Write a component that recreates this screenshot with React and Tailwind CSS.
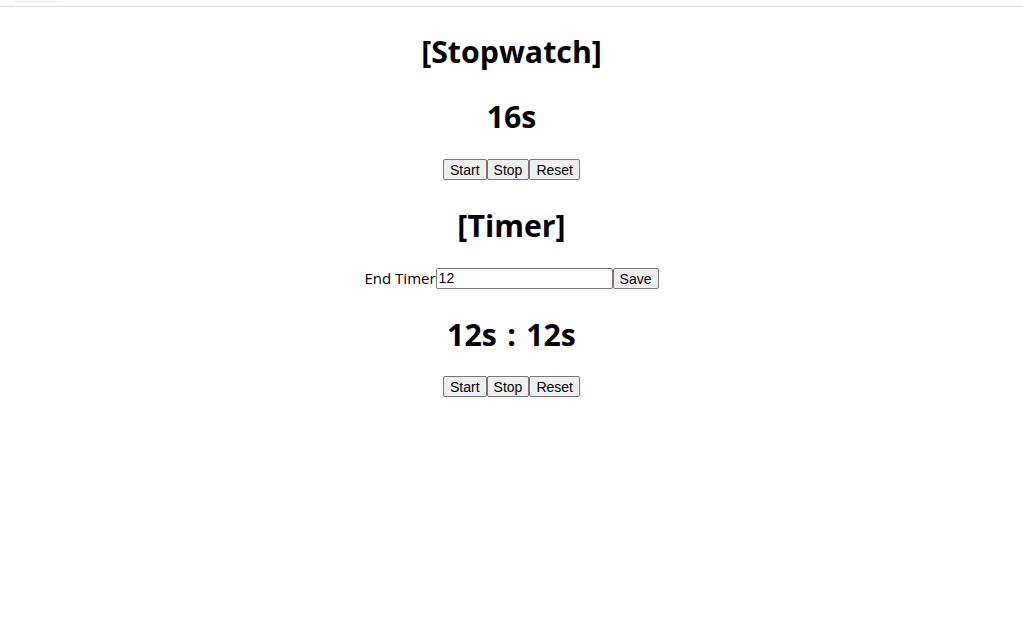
import React from "react";

const btn =
  "h-[21px] px-[6px] bg-[#efefef] border border-[#767676] rounded-[2px] text-[14px] leading-none text-black font-['Liberation_Sans',Arial,sans-serif]";

function Buttons({ className }) {
  return (
    <div className={"flex h-[21px] " + className}>
      <button className={btn}>Start</button>
      <button className={btn}>Stop</button>
      <button className={btn}>Reset</button>
    </div>
  );
}

export default function App() {
  return (
    <div className="min-h-screen bg-white text-black font-['Open_Sans','Noto_Sans',sans-serif]">
      {/* top strip */}
      <div className="h-[7px] border-b border-[#e0e0e0]">
        <div className="ml-[15px] w-[48px] h-[2px] rounded-b-md border border-t-0 border-[#ececec]" />
      </div>

      <div className="flex flex-col items-center">
        <h1 className="mt-[23px] text-[30.3px] leading-[43px] font-bold">[Stopwatch]</h1>
        <h1 className="mt-[22px] text-[30.3px] leading-[43px] font-bold">16s</h1>
        <Buttons className="mt-[21px]" />

        <h1 className="mt-[24px] text-[30.3px] leading-[43px] font-bold">[Timer]</h1>
        <div className="mt-[21px] h-[21px] flex items-center text-[15px]">
          <span className="leading-[21px]">End Timer</span>
          <input
            defaultValue="12"
            className="w-[177px] h-[21px] px-[2px] border border-[#767676] rounded-[2px] text-[14px] font-['Liberation_Sans',Arial,sans-serif] outline-none"
          />
          <button className={btn}>Save</button>
        </div>

        <h1 className="mt-[24px] text-[30.3px] leading-[43px] font-bold [word-spacing:2.5px]">12s : 12s</h1>
        <Buttons className="mt-[20px]" />
      </div>
    </div>
  );
}
